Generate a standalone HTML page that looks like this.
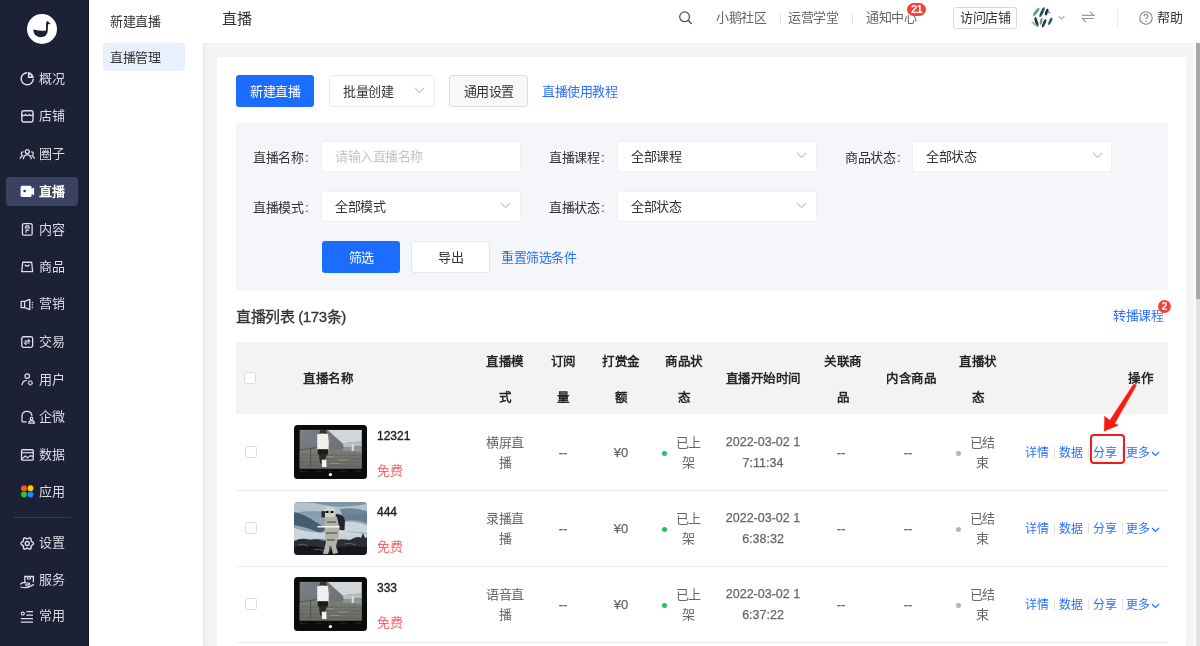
<!DOCTYPE html>
<html lang="zh-CN">
<head>
<meta charset="utf-8">
<style>
*{margin:0;padding:0;box-sizing:border-box}
html,body{width:1200px;height:646px;overflow:hidden;background:#fff}
body{font-family:"Liberation Sans",sans-serif;font-size:13px;color:#333;position:relative;letter-spacing:-0.5px}
.a{position:absolute;white-space:nowrap;will-change:transform}
#sb{left:0;top:0;width:89px;height:646px;background:#1c2136;border-right:1px solid #10142a}
#logo{left:27.3px;top:13.6px;width:30px;height:30px;border-radius:50%;background:#fff}
.nav{left:6px;width:72px;height:28px;border-radius:4px;color:#cfd2da;font-size:13px}
.nav svg{position:absolute;left:14px;top:7px}
.nav span{position:absolute;left:33px;top:6px;line-height:16px}
.nav.on{background:#3b4261;color:#fff;font-weight:bold}
#sb2{left:89px;top:0;width:114px;height:646px;background:#fff}
#hdr{left:203px;top:0;width:997px;height:43px;background:#fff}
#main{left:203px;top:43px;width:993px;height:603px;background:#f4f4f4;box-shadow:inset 5px 0 6px -4px rgba(0,0,0,0.07)}
#card{left:217px;top:57px;width:969px;height:600px;background:#fff}
.btn{height:32px;line-height:34px;text-align:center;border-radius:3px}
.blue{background:#1b6dff;color:#fff}
.link{color:#2b70ff}
#filter{left:236px;top:122px;width:932px;height:168px;background:#f5f6fa}
.lbl{color:#333;line-height:16px}
.sel{height:31px;width:200px;background:#fff;border-radius:2px;border:1px solid #eef0f4}
.sel span{position:absolute;left:13px;top:7px;line-height:16px;color:#333}
.chev{position:absolute}
.th{font-weight:bold;color:#262626;font-size:12.5px;line-height:16px;text-align:center}
.td{color:#666;line-height:16px;text-align:center}
.rowline{left:236px;width:932px;height:1px;background:#ebebeb}
.cb{width:12px;height:12px;border:1px solid #dcdcdc;border-radius:2px;background:#fff}
</style>
</head>
<body>
<!-- left dark sidebar -->
<div id="sb" class="a"></div>
<div id="logo" class="a">
  <svg width="30" height="30" viewBox="0 0 30 30" style="position:absolute;left:0;top:0">
    <path d="M6.1 15.6 Q12 17.2 19 16.4 L19 9.5 Q19.3 7 20.6 7 Q21.6 7.2 21.8 8.6 L23.8 9.9 L21 10.3 L20.8 16.5 Q20.4 23.3 13.2 23.3 Q7 23 6.1 15.6 Z" fill="#1c2136"/>
  </svg>
</div>

<div class="a" style="left:6px;top:177px;width:72px;height:29px;border-radius:4px;background:#3b4261"></div>
<div class="a" style="left:39px;top:71px;line-height:16px;color:#dcdee5;">概况</div>
<svg class="a" style="left:20px;top:71px" width="16" height="16" viewBox="0 0 16 16"><path d="M7.2 1.75 A6.05 6.05 0 1 0 13.25 7.8" fill="none" stroke="#dcdee5" stroke-width="1.5"/><path d="M7.9 1.1 V7.1 H13.9 A6.3 6.3 0 0 0 7.9 1.1 Z" fill="#dcdee5"/><circle cx="10.2" cy="4.7" r="0.9" fill="#1c2136"/></svg>
<div class="a" style="left:39px;top:108px;line-height:16px;color:#dcdee5;">店铺</div>
<svg class="a" style="left:20px;top:109px" width="16" height="16" viewBox="0 0 16 16"><rect x="1.8" y="1.8" width="11.2" height="11.2" rx="2" fill="none" stroke="#dcdee5" stroke-width="1.4"/><path d="M1.8 5.3 Q3.6 7.8 5.5 5.5 Q7.4 7.8 9.3 5.5 Q11.2 7.8 13 5.3" fill="none" stroke="#dcdee5" stroke-width="1.3"/></svg>
<div class="a" style="left:39px;top:146px;line-height:16px;color:#dcdee5;">圈子</div>
<svg class="a" style="left:19px;top:147px" width="16" height="16" viewBox="0 0 16 16"><circle cx="8.3" cy="4.6" r="2" fill="none" stroke="#dcdee5" stroke-width="1.3"/><path d="M4.4 12.2 Q4.6 7.8 8.3 7.8 Q12 7.8 12.2 12.2" fill="none" stroke="#dcdee5" stroke-width="1.3"/><path d="M3.4 9.3 Q1.3 9.5 1.2 11.8 M13.2 9.3 Q15.3 9.5 15.4 11.8" fill="none" stroke="#dcdee5" stroke-width="1.3"/><path d="M4.6 4.9 Q2.2 4.6 2.3 7 Q2.4 8.6 4.2 8.6 M12 4.9 Q14.4 4.6 14.3 7 Q14.2 8.6 12.4 8.6" fill="none" stroke="#dcdee5" stroke-width="1.2"/></svg>
<div class="a" style="left:39px;top:184px;line-height:16px;color:#fff;font-weight:bold;">直播</div>
<svg class="a" style="left:20px;top:185px" width="16" height="16" viewBox="0 0 16 16"><rect x="0.6" y="0.8" width="11" height="11.2" rx="1.6" fill="#fff"/><polygon points="11,4.2 14.1,2.6 14.1,10.2 11,8.6" fill="#fff"/><circle cx="4.6" cy="6" r="1.3" fill="#2a3050"/></svg>
<div class="a" style="left:39px;top:222px;line-height:16px;color:#dcdee5;">内容</div>
<svg class="a" style="left:21px;top:222px" width="16" height="16" viewBox="0 0 16 16"><rect x="1.45" y="1.55" width="9.7" height="11.6" rx="1.5" fill="none" stroke="#dcdee5" stroke-width="1.3"/><path d="M4.3 6 Q4.6 3.6 6.3 3.6 Q8 3.6 8.3 6 Z" fill="none" stroke="#dcdee5" stroke-width="1.2"/><path d="M4.5 7.6 H8.2 V8.8 H5.7 V10.8 H4.5 Z" fill="#dcdee5"/></svg>
<div class="a" style="left:39px;top:259px;line-height:16px;color:#dcdee5;">商品</div>
<svg class="a" style="left:21px;top:261px" width="16" height="16" viewBox="0 0 16 16"><path d="M1.75 1.25 H10.65 L11.65 10.65 H0.75 Z" fill="none" stroke="#dcdee5" stroke-width="1.3" stroke-linejoin="round"/><path d="M3.9 3.8 Q6.2 6.4 8.5 3.8" fill="none" stroke="#dcdee5" stroke-width="1.3"/></svg>
<div class="a" style="left:39px;top:296px;line-height:16px;color:#dcdee5;">营销</div>
<svg class="a" style="left:20px;top:298px" width="16" height="16" viewBox="0 0 16 16"><path d="M1.2 3.4 H4.6 V9.6 H1.2 Z M4.6 3.4 L9.8 1.3 V11.6 L4.6 9.6" fill="none" stroke="#dcdee5" stroke-width="1.3" stroke-linejoin="round"/><circle cx="12.4" cy="4.4" r="0.75" fill="#dcdee5"/><circle cx="12.4" cy="6.9" r="0.75" fill="#dcdee5"/><circle cx="12.4" cy="9.5" r="0.75" fill="#dcdee5"/></svg>
<div class="a" style="left:39px;top:334px;line-height:16px;color:#dcdee5;">交易</div>
<svg class="a" style="left:21px;top:335px" width="16" height="16" viewBox="0 0 16 16"><rect x="0.75" y="1.75" width="10.9" height="10.6" rx="1.8" fill="none" stroke="#dcdee5" stroke-width="1.3"/><path d="M3.6 6.2 H8.6 L7 4.4 M8.6 8 H3.6 L5.3 9.9" fill="none" stroke="#dcdee5" stroke-width="1.2"/></svg>
<div class="a" style="left:39px;top:372px;line-height:16px;color:#dcdee5;">用户</div>
<svg class="a" style="left:21px;top:372px" width="16" height="16" viewBox="0 0 16 16"><circle cx="6.2" cy="4.1" r="2.3" fill="none" stroke="#dcdee5" stroke-width="1.3"/><path d="M1 13.3 Q1.3 8.6 5.8 8.3" fill="none" stroke="#dcdee5" stroke-width="1.3"/><circle cx="9.3" cy="10.8" r="1.9" fill="none" stroke="#dcdee5" stroke-width="1.4" stroke-dasharray="1.6 0.4"/></svg>
<div class="a" style="left:39px;top:409px;line-height:16px;color:#dcdee5;">企微</div>
<svg class="a" style="left:21px;top:410px" width="16" height="16" viewBox="0 0 16 16"><path d="M5.6 11.9 H2.4 Q1 11.9 1 10.4 V6.6 Q1 1.4 6 1.4 Q10.4 1.4 11 5.8" fill="none" stroke="#dcdee5" stroke-width="1.3"/><circle cx="10.6" cy="8.4" r="1.3" fill="none" stroke="#dcdee5" stroke-width="1.1"/><path d="M7.8 13.2 Q7.9 10.6 10.6 10.6 Q13.3 10.6 13.4 13.2 Z" fill="none" stroke="#dcdee5" stroke-width="1.2"/></svg>
<div class="a" style="left:39px;top:447px;line-height:16px;color:#dcdee5;">数据</div>
<svg class="a" style="left:20px;top:448px" width="16" height="16" viewBox="0 0 16 16"><rect x="1.55" y="1.75" width="11.7" height="10.4" rx="1" fill="none" stroke="#dcdee5" stroke-width="1.3"/><path d="M1.6 4.7 H13.2" stroke="#dcdee5" stroke-width="1.2"/><path d="M1 11.6 L5.2 8 L7.6 9.7 L10.4 7.6 L13 8.6" fill="none" stroke="#dcdee5" stroke-width="1.2"/></svg>
<div class="a" style="left:39px;top:484px;line-height:16px;color:#dcdee5;">应用</div>
<svg class="a" style="left:20px;top:484px" width="16" height="16" viewBox="0 0 16 16"><circle cx="4" cy="4.2" r="2.9" fill="#ff5722"/><circle cx="10.5" cy="4.2" r="2.9" fill="#ffd100"/><circle cx="4" cy="10.5" r="2.9" fill="#22cc22"/><circle cx="10.5" cy="10.5" r="2.9" fill="#2186ff"/></svg>
<div class="a" style="left:39px;top:535px;line-height:16px;color:#dcdee5;">设置</div>
<svg class="a" style="left:20px;top:536px" width="16" height="16" viewBox="0 0 16 16"><path d="M13.50 7.50 L13.45 7.17 L13.31 6.86 L13.10 6.57 L12.82 6.32 L12.51 6.09 L12.20 5.89 L11.90 5.72 L11.64 5.55 L11.43 5.37 L11.28 5.18 L11.18 4.95 L11.14 4.68 L11.12 4.37 L11.12 4.02 L11.10 3.65 L11.06 3.27 L10.98 2.90 L10.83 2.57 L10.63 2.29 L10.38 2.09 L10.07 1.97 L9.73 1.93 L9.37 1.97 L9.01 2.08 L8.66 2.24 L8.33 2.41 L8.03 2.58 L7.75 2.72 L7.50 2.82 L7.25 2.85 L7.00 2.82 L6.75 2.72 L6.47 2.58 L6.17 2.41 L5.84 2.24 L5.49 2.08 L5.13 1.97 L4.77 1.93 L4.43 1.97 L4.13 2.09 L3.87 2.29 L3.67 2.57 L3.52 2.90 L3.44 3.27 L3.40 3.65 L3.38 4.02 L3.38 4.37 L3.36 4.68 L3.32 4.95 L3.22 5.18 L3.07 5.37 L2.86 5.55 L2.60 5.72 L2.30 5.89 L1.99 6.09 L1.68 6.32 L1.40 6.57 L1.19 6.86 L1.05 7.17 L1.00 7.50 L1.05 7.83 L1.19 8.14 L1.40 8.43 L1.68 8.68 L1.99 8.91 L2.30 9.11 L2.60 9.28 L2.86 9.45 L3.07 9.63 L3.22 9.82 L3.32 10.05 L3.36 10.32 L3.38 10.63 L3.38 10.98 L3.40 11.35 L3.44 11.73 L3.52 12.10 L3.67 12.43 L3.87 12.71 L4.12 12.91 L4.43 13.03 L4.77 13.07 L5.13 13.03 L5.49 12.92 L5.84 12.76 L6.17 12.59 L6.47 12.42 L6.75 12.28 L7.00 12.18 L7.25 12.15 L7.50 12.18 L7.75 12.28 L8.03 12.42 L8.33 12.59 L8.66 12.76 L9.01 12.92 L9.37 13.03 L9.73 13.07 L10.07 13.03 L10.38 12.91 L10.63 12.71 L10.83 12.43 L10.98 12.10 L11.06 11.73 L11.10 11.35 L11.12 10.98 L11.12 10.63 L11.14 10.32 L11.18 10.05 L11.28 9.82 L11.43 9.63 L11.64 9.45 L11.90 9.28 L12.20 9.11 L12.51 8.91 L12.82 8.68 L13.10 8.43 L13.31 8.14 L13.45 7.83 L13.50 7.50 Z" fill="none" stroke="#dcdee5" stroke-width="1.45" stroke-linejoin="round"/><circle cx="7.25" cy="7.5" r="2" fill="none" stroke="#dcdee5" stroke-width="1.4"/></svg>
<div class="a" style="left:39px;top:572px;line-height:16px;color:#dcdee5;">服务</div>
<svg class="a" style="left:20px;top:575px" width="16" height="16" viewBox="0 0 16 16"><path d="M4.8 7.2 V1.5 H13.4 V7.2" fill="none" stroke="#dcdee5" stroke-width="1.3"/><path d="M7.6 1.5 V4 H10.4 V1.5" fill="none" stroke="#dcdee5" stroke-width="1.1"/><path d="M0.6 9 Q3 6.8 6 7.8 L9.2 8.2 Q10.2 9.2 9 9.8 L5.6 10 M1 12 Q6.5 14.2 13.5 9.6" fill="none" stroke="#dcdee5" stroke-width="1.3" stroke-linecap="round"/></svg>
<div class="a" style="left:39px;top:608px;line-height:16px;color:#dcdee5;">常用</div>
<svg class="a" style="left:20px;top:610px" width="16" height="16" viewBox="0 0 16 16"><circle cx="2.8" cy="3.6" r="1.5" fill="none" stroke="#dcdee5" stroke-width="1.2"/><path d="M6.4 1.7 H13 M6.4 5.2 H13 M0.8 8.6 H13 M0.8 12.1 H13" stroke="#dcdee5" stroke-width="1.3"/></svg>
<div class="a" style="left:14px;top:517px;width:57px;height:1px;background:#363c50"></div>

<!-- second sidebar -->
<div id="sb2" class="a"></div>
<div class="a" style="left:110px;top:14px;line-height:16px;color:#333">新建直播</div>
<div class="a" style="left:103px;top:43px;width:82px;height:28px;background:#e8f0fd;border-radius:3px"></div>
<div class="a" style="left:110px;top:50px;line-height:16px;color:#333">直播管理</div>

<!-- header -->
<div id="hdr" class="a"></div>
<div class="a" style="left:222px;top:10px;font-size:15px;line-height:18px;color:#333">直播</div>

<!-- main -->
<div id="main" class="a"></div>
<div id="card" class="a"></div>


<!-- header right -->
<svg class="a" style="left:678px;top:10px" width="15" height="15" viewBox="0 0 15 15"><circle cx="6.6" cy="6.8" r="4.9" fill="none" stroke="#555" stroke-width="1.3"/><path d="M10.2 10.4 L13.3 13.5" stroke="#555" stroke-width="1.4" stroke-linecap="round"/></svg>
<div class="a" style="left:716px;top:10px;line-height:16px;color:#666">小鹅社区</div>
<div class="a" style="left:780px;top:13px;width:1px;height:11px;background:#e5e5e5"></div>
<div class="a" style="left:788px;top:10px;line-height:16px;color:#666">运营学堂</div>
<div class="a" style="left:852px;top:13px;width:1px;height:11px;background:#e5e5e5"></div>
<div class="a" style="left:866px;top:10px;line-height:16px;color:#666">通知中心</div>
<div class="a" style="left:907px;top:3px;width:19px;height:13px;border-radius:7px;background:#f0443a;color:#fff;font-size:11px;line-height:13px;text-align:center;font-weight:bold">21</div>
<div class="a" style="left:953px;top:7px;width:64px;height:22px;border:1px solid #d9d9d9;border-radius:3px;color:#333;line-height:20px;text-align:center">访问店铺</div>
<svg class="a" style="left:1030px;top:6px" width="24" height="23" viewBox="1030 6 24 23"><ellipse cx="1036.25" cy="11.85" rx="1.30" ry="4.95" transform="rotate(37.5 1036.25 11.85)" fill="#4f9a94"/><ellipse cx="1042.05" cy="12.15" rx="1.40" ry="5.41" transform="rotate(25.2 1042.05 12.15)" fill="#2c4a52"/><ellipse cx="1046.70" cy="12.05" rx="1.40" ry="3.62" transform="rotate(19.3 1046.70 12.05)" fill="#1d2f38"/><ellipse cx="1036.45" cy="21.90" rx="1.40" ry="4.98" transform="rotate(163.4 1036.45 21.90)" fill="#203640"/><ellipse cx="1034.50" cy="24.00" rx="1.00" ry="3.80" transform="rotate(128.7 1034.50 24.00)" fill="#8fb3ad"/><ellipse cx="1041.10" cy="21.30" rx="1.20" ry="3.46" transform="rotate(-167.9 1041.10 21.30)" fill="#6d8fb0"/><ellipse cx="1044.10" cy="23.30" rx="1.30" ry="4.54" transform="rotate(24.0 1044.10 23.30)" fill="#22343c"/><ellipse cx="1050.30" cy="21.30" rx="1.40" ry="4.09" transform="rotate(23.6 1050.30 21.30)" fill="#2f5e5e"/><ellipse cx="1048.85" cy="12.40" rx="0.70" ry="2.01" transform="rotate(106.5 1048.85 12.40)" fill="#5c8d88"/></svg>
<svg class="a" style="left:1057px;top:15px" width="9" height="6" viewBox="0 0 9 6"><path d="M1.4 1.2 L4.4 4 L7.4 1.2" fill="none" stroke="#aaa" stroke-width="1.1"/></svg>
<svg class="a" style="left:1081px;top:10px" width="15" height="14" viewBox="0 0 15 14"><path d="M1 5.3 H12.8 L9 1.6 M13 8.5 H1.4 L5 12.4" fill="none" stroke="#999" stroke-width="1.15"/></svg>
<div class="a" style="left:1117px;top:9px;width:1px;height:19px;background:#ebebeb"></div>
<svg class="a" style="left:1139px;top:11px" width="14" height="14" viewBox="0 0 14 14"><circle cx="7" cy="7" r="6.2" fill="none" stroke="#888" stroke-width="1.1"/><path d="M5 5.3 Q5 3.4 7 3.4 Q9 3.4 9 5.2 Q9 6.3 7.6 6.9 Q7 7.2 7 8.3" fill="none" stroke="#888" stroke-width="1.1"/><circle cx="7" cy="10.2" r="0.7" fill="#888"/></svg>
<div class="a" style="left:1157px;top:10px;line-height:16px;color:#333">帮助</div>

<!-- scrollbar -->
<div class="a" style="left:1193px;top:43px;width:7px;height:603px;background:#fafafa"></div>
<div class="a" style="left:1196px;top:43px;width:4px;height:603px;background:#e2e2e2"></div>
<div class="a" style="left:1196px;top:43px;width:4px;height:256px;background:#a8a8a8"></div>

<!-- action row -->
<div class="a btn blue" style="left:236px;top:75px;width:78px">新建直播</div>
<div class="a" style="left:329px;top:75px;width:106px;height:32px;border:1px solid #ececec;border-radius:3px;background:#fff"></div>
<div class="a" style="left:343px;top:84px;line-height:16px;color:#333">批量创建</div>
<svg class="a chev" style="left:414px;top:87px" width="11" height="7" viewBox="0 0 11 7"><path d="M1 1 L5.5 5.5 L10 1" fill="none" stroke="#c8c8c8" stroke-width="1.1"/></svg>
<div class="a btn" style="left:449px;top:75px;width:79px;border:1px solid #dcdcdc;background:#f7f8fa;line-height:32px;color:#333">通用设置</div>
<div class="a link" style="left:542px;top:84px;line-height:16px">直播使用教程</div>

<!-- filter -->
<div id="filter" class="a"></div>
<div class="a lbl" style="left:253px;top:150px">直播名称<span style="margin-left:2px">:</span></div>
<div class="a sel" style="left:321px;top:141px"><span style="color:#c4c4c4">请输入直播名称</span></div>
<div class="a lbl" style="left:549px;top:150px">直播课程<span style="margin-left:2px">:</span></div>
<div class="a sel" style="left:617px;top:141px"><span>全部课程</span></div>
<svg class="a chev" style="left:796px;top:152px" width="11" height="7" viewBox="0 0 11 7"><path d="M1 1 L5.5 5.5 L10 1" fill="none" stroke="#c8c8c8" stroke-width="1.1"/></svg>
<div class="a lbl" style="left:845px;top:150px">商品状态<span style="margin-left:2px">:</span></div>
<div class="a sel" style="left:912px;top:141px"><span>全部状态</span></div>
<svg class="a chev" style="left:1092px;top:152px" width="11" height="7" viewBox="0 0 11 7"><path d="M1 1 L5.5 5.5 L10 1" fill="none" stroke="#c8c8c8" stroke-width="1.1"/></svg>
<div class="a lbl" style="left:253px;top:200px">直播模式<span style="margin-left:2px">:</span></div>
<div class="a sel" style="left:321px;top:191px"><span>全部模式</span></div>
<svg class="a chev" style="left:500px;top:202px" width="11" height="7" viewBox="0 0 11 7"><path d="M1 1 L5.5 5.5 L10 1" fill="none" stroke="#c8c8c8" stroke-width="1.1"/></svg>
<div class="a lbl" style="left:549px;top:200px">直播状态<span style="margin-left:2px">:</span></div>
<div class="a sel" style="left:617px;top:191px"><span>全部状态</span></div>
<svg class="a chev" style="left:796px;top:202px" width="11" height="7" viewBox="0 0 11 7"><path d="M1 1 L5.5 5.5 L10 1" fill="none" stroke="#c8c8c8" stroke-width="1.1"/></svg>
<div class="a btn blue" style="left:322px;top:241px;width:78px">筛选</div>
<div class="a btn" style="left:411px;top:241px;width:79px;border:1px solid #e6e6e6;background:#fff;line-height:32px;color:#333">导出</div>
<div class="a link" style="left:501px;top:250px;line-height:16px">重置筛选条件</div>

<!-- list title -->
<div class="a" style="left:236px;top:308px;font-size:15px;letter-spacing:-0.4px;-webkit-text-stroke:0.3px #333;line-height:18px;color:#333">直播列表 (173条)</div>
<div class="a link" style="left:1113px;top:308px;line-height:16px">转播课程</div>
<div class="a" style="left:1158px;top:300px;width:13px;height:13px;border-radius:50%;background:#f0443a;color:#fff;font-size:10px;line-height:13px;text-align:center;font-weight:bold;letter-spacing:0">2</div>

<!-- table header -->
<div class="a" style="left:236px;top:342px;width:932px;height:72px;background:#f3f3f4"></div>
<div class="a cb" style="left:244px;top:372px"></div>
<div class="a th" style="left:303px;top:371px">直播名称</div>
<svg width="0" height="0" style="position:absolute">
<defs>
<linearGradient id="wallg" x1="0" y1="0" x2="1" y2="1"><stop offset="0" stop-color="#7b8187"/><stop offset="1" stop-color="#62676c"/></linearGradient>
<linearGradient id="stairg" x1="0" y1="0" x2="0" y2="1"><stop offset="0" stop-color="#7d7e78"/><stop offset="1" stop-color="#6a6a64"/></linearGradient>
<linearGradient id="skyg2" x1="0" y1="0" x2="0" y2="1"><stop offset="0" stop-color="#7f93a6"/><stop offset="0.55" stop-color="#97a9b8"/><stop offset="1" stop-color="#647a8f"/></linearGradient>
<filter id="blr" x="-5%" y="-5%" width="110%" height="110%"><feGaussianBlur stdDeviation="0.35"/></filter>
<symbol id="th1" viewBox="0 0 73 54">
 <rect x="0" y="0" width="73" height="54" rx="3.5" fill="#0b0b0b"/>
 <g transform="translate(5.7,4.9)" filter="url(#blr)">
  <rect x="0" y="0" width="62" height="38.6" fill="url(#wallg)"/>
  <polygon points="27.9,0 62,0 62,11.4 42.8,13.4" fill="#d2d7db"/>
  <polygon points="42.8,13.4 62,11.4 62,16 44,17.5" fill="#b9bec1"/>
  <polygon points="44,17.5 62,16 62,24 40,25" fill="#8f9497"/>
  <rect x="52" y="14" width="2" height="7" fill="#dfe2e4"/>
  <polygon points="0,21 16,18 62,22 62,38.6 0,38.6" fill="url(#stairg)"/>
  <path d="M0 25 L62 25.5 M0 28.5 L62 29 M0 32 L62 32.5 M0 35.5 L62 36" stroke="#62625c" stroke-width="0.8"/>
  <path d="M26 27 H34 M38 30 H48 M30 33.5 H40" stroke="#9a9a92" stroke-width="0.8"/>
  <path d="M0 20 L17 17.8 M11 19 V36.6" stroke="#4a5054" stroke-width="1"/>
  <rect x="19.8" y="0" width="7.4" height="4.6" rx="2.2" fill="#3b302b"/>
  <path d="M17.4 4.6 Q22.5 3 28.3 4.2 L29.2 12 L28.8 19.8 L17.6 19.8 Z" fill="#eef0f2"/>
  <path d="M28.3 5.5 L30.5 11 L29.2 12 Z" fill="#c98a6a"/>
  <rect x="18" y="19.3" width="10.3" height="5" fill="#1c1c1c"/>
  <path d="M19 24 L20.5 33.5 L23.5 33.5 L27.8 24 Z" fill="#2b2b2b"/>
  <path d="M22 29.8 L26.6 29.8 L26.8 37 L22.4 37 Z" fill="#f4f4f4"/>
 </g>
 <circle cx="36.4" cy="49.6" r="1.6" fill="#fff"/>
 <path d="M5 46.3 H14 M22 46.3 H27 M34 46.3 H39 M46 46.3 H52 M60 46.3 H67" stroke="#2e2e2e" stroke-width="0.7"/>
</symbol>
<symbol id="th2" viewBox="0 0 73 53">
 <clipPath id="cp2"><rect x="0" y="0" width="73" height="53" rx="3.5"/></clipPath>
 <g clip-path="url(#cp2)" filter="url(#blr)">
  <rect x="0" y="0" width="73" height="53" fill="url(#skyg2)"/>
  <path d="M0 1 Q15 -1 30 3 Q45 7 73 2 V11 Q55 15 38 11 Q18 7 0 11 Z" fill="#b9c6d0" opacity="0.9"/>
  <path d="M0 10 Q10 12 22 20 Q28 24 34 27 L26 31 Q12 25 0 23 Z" fill="#3f5870" opacity="0.95"/>
  <path d="M46 7 Q60 5 73 9 V21 Q62 16 50 19 Z" fill="#5c768d" opacity="0.8"/>
  <path d="M44 21 Q58 17 73 23 V31 Q55 28 44 31 Z" fill="#d5dde3" opacity="0.85"/>
  <path d="M0 26 Q18 32 34 30 Q56 29 73 32 V38 Q50 40 30 37 Q12 36 0 39 Z" fill="#dfe5e9" opacity="0.75"/>
  <path d="M0 39 Q8 35 16 38 Q24 36 30 39 Q48 36 56 38 Q64 33 67 36 L69 31 L71 36 L73 35 V53 H0 Z" fill="#2a2f34"/>
  <path d="M0 45 Q15 42 30 46 Q50 43 73 45 V53 H0 Z" fill="#16181b"/>
  <path d="M4 43 Q9 41 14 44 M50 42 Q56 40 62 43 M20 48 Q26 46 30 49" stroke="#6a6e70" stroke-width="0.8" fill="none"/>
  <path d="M42 12 Q50 12 51 19 L50.5 28 Q46 29 43 26 Z" fill="#23272b"/>
  <path d="M31 15 Q37 13 43 15 L45.5 26 L44.5 34 L42 44 L44 51 L39 52 L37 44 L34 52 L29 52 L32 40 L30.5 30 Z" fill="#b3b1aa"/>
  <path d="M29.5 9 Q30.5 4.5 35.5 4.5 Q40.5 4.5 41.5 9 L41 15 L30 15 Z" fill="#d0cfca"/>
  <path d="M31.5 10 H34.5 M36.5 10 H39.5" stroke="#111" stroke-width="1.8"/>
  <rect x="27.5" y="9" width="3.5" height="6.5" rx="1" fill="#26292c"/>
  <path d="M33 20 L42 20 M32 31 L43 31 M33 38 L41 38 M36 44 V50" stroke="#3d3d3a" stroke-width="1"/>
  <path d="M23.5 24.7 H45.5" stroke="#f2f4f4" stroke-width="1.6"/>
 </g>
</symbol>
</defs></svg>
<div class="a th" style="left:455.0px;top:354px;width:100px;">直播模</div>
<div class="a th" style="left:455.0px;top:390px;width:100px;">式</div>
<div class="a th" style="left:513.0px;top:354px;width:100px;">订阅</div>
<div class="a th" style="left:513.0px;top:390px;width:100px;">量</div>
<div class="a th" style="left:571.0px;top:354px;width:100px;">打赏金</div>
<div class="a th" style="left:571.0px;top:390px;width:100px;">额</div>
<div class="a th" style="left:633.5px;top:354px;width:100px;">商品状</div>
<div class="a th" style="left:633.5px;top:390px;width:100px;">态</div>
<div class="a th" style="left:793.0px;top:354px;width:100px;">关联商</div>
<div class="a th" style="left:793.0px;top:390px;width:100px;">品</div>
<div class="a th" style="left:927.5px;top:354px;width:100px;">直播状</div>
<div class="a th" style="left:927.5px;top:390px;width:100px;">态</div>
<div class="a th" style="left:713.0px;top:371px;width:100px;">直播开始时间</div>
<div class="a th" style="left:861.0px;top:371px;width:100px;">内含商品</div>
<div class="a th" style="left:1100px;top:371px;width:53px;text-align:right">操作</div>
<div class="a rowline" style="top:490px"></div>
<div class="a cb" style="left:245px;top:446px"></div>
<svg class="a" style="left:294px;top:425px" width="73" height="54"><use href="#th1"/></svg>
<div class="a" style="left:377px;top:429px;line-height:14px;font-size:12px;letter-spacing:0;color:#222;-webkit-text-stroke:0.35px #222">12321</div>
<div class="a" style="left:377px;top:463px;line-height:16px;color:#fb6767">免费</div>
<div class="a td" style="left:455.0px;top:435px;width:100px;">横屏直</div>
<div class="a td" style="left:455.0px;top:455px;width:100px;">播</div>
<div class="a td" style="left:513.0px;top:445px;width:100px;-webkit-text-stroke:0.25px #666;letter-spacing:0">--</div>
<div class="a td" style="left:571.0px;top:445px;width:100px;-webkit-text-stroke:0.25px #666;letter-spacing:0">¥0</div>
<div class="a" style="left:662px;top:451px;width:5px;height:5px;border-radius:50%;background:#1fc35f"></div>
<div class="a td" style="left:638.0px;top:435px;width:100px;">已上</div>
<div class="a td" style="left:638.0px;top:455px;width:100px;">架</div>
<div class="a td" style="left:713.0px;top:435px;width:100px;font-size:12.5px;letter-spacing:0;-webkit-text-stroke:0.25px #666;line-height:15px">2022-03-02 1</div>
<div class="a td" style="left:713.0px;top:456px;width:100px;font-size:12.5px;letter-spacing:0;-webkit-text-stroke:0.25px #666;line-height:15px">7:11:34</div>
<div class="a td" style="left:791.0px;top:445px;width:100px;-webkit-text-stroke:0.25px #666;letter-spacing:0">--</div>
<div class="a td" style="left:858.0px;top:445px;width:100px;-webkit-text-stroke:0.25px #666;letter-spacing:0">--</div>
<div class="a" style="left:955.5px;top:451px;width:5px;height:5px;border-radius:50%;background:#b3b3b3"></div>
<div class="a td" style="left:932.0px;top:435px;width:100px;">已结</div>
<div class="a td" style="left:932.0px;top:455px;width:100px;">束</div>
<div class="a link" style="left:1025px;top:445px;line-height:16px;font-size:12px;letter-spacing:0">详情</div>
<div class="a link" style="left:1059px;top:445px;line-height:16px;font-size:12px;letter-spacing:0">数据</div>
<div class="a link" style="left:1093px;top:445px;line-height:16px;font-size:12px;letter-spacing:0">分享</div>
<div class="a link" style="left:1126px;top:445px;line-height:16px;font-size:12px;letter-spacing:0">更多</div>
<div class="a" style="left:1053.5px;top:447px;width:1px;height:11px;background:#e3e3e3"></div>
<div class="a" style="left:1087.5px;top:447px;width:1px;height:11px;background:#e3e3e3"></div>
<div class="a" style="left:1121.5px;top:447px;width:1px;height:11px;background:#e3e3e3"></div>
<svg class="a" style="left:1151px;top:451px" width="9" height="6" viewBox="0 0 9 6"><path d="M1 1 L4.5 4.5 L8 1" fill="none" stroke="#2b70ff" stroke-width="1.2"/></svg>
<div class="a rowline" style="top:566px"></div>
<div class="a cb" style="left:245px;top:522px"></div>
<svg class="a" style="left:294px;top:502px" width="73" height="53"><use href="#th2"/></svg>
<div class="a" style="left:377px;top:505px;line-height:14px;font-size:12px;letter-spacing:0;color:#222;-webkit-text-stroke:0.35px #222">444</div>
<div class="a" style="left:377px;top:539px;line-height:16px;color:#fb6767">免费</div>
<div class="a td" style="left:455.0px;top:511px;width:100px;">录播直</div>
<div class="a td" style="left:455.0px;top:531px;width:100px;">播</div>
<div class="a td" style="left:513.0px;top:521px;width:100px;-webkit-text-stroke:0.25px #666;letter-spacing:0">--</div>
<div class="a td" style="left:571.0px;top:521px;width:100px;-webkit-text-stroke:0.25px #666;letter-spacing:0">¥0</div>
<div class="a" style="left:662px;top:527px;width:5px;height:5px;border-radius:50%;background:#1fc35f"></div>
<div class="a td" style="left:638.0px;top:511px;width:100px;">已上</div>
<div class="a td" style="left:638.0px;top:531px;width:100px;">架</div>
<div class="a td" style="left:713.0px;top:511px;width:100px;font-size:12.5px;letter-spacing:0;-webkit-text-stroke:0.25px #666;line-height:15px">2022-03-02 1</div>
<div class="a td" style="left:713.0px;top:532px;width:100px;font-size:12.5px;letter-spacing:0;-webkit-text-stroke:0.25px #666;line-height:15px">6:38:32</div>
<div class="a td" style="left:791.0px;top:521px;width:100px;-webkit-text-stroke:0.25px #666;letter-spacing:0">--</div>
<div class="a td" style="left:858.0px;top:521px;width:100px;-webkit-text-stroke:0.25px #666;letter-spacing:0">--</div>
<div class="a" style="left:955.5px;top:527px;width:5px;height:5px;border-radius:50%;background:#b3b3b3"></div>
<div class="a td" style="left:932.0px;top:511px;width:100px;">已结</div>
<div class="a td" style="left:932.0px;top:531px;width:100px;">束</div>
<div class="a link" style="left:1025px;top:521px;line-height:16px;font-size:12px;letter-spacing:0">详情</div>
<div class="a link" style="left:1059px;top:521px;line-height:16px;font-size:12px;letter-spacing:0">数据</div>
<div class="a link" style="left:1093px;top:521px;line-height:16px;font-size:12px;letter-spacing:0">分享</div>
<div class="a link" style="left:1126px;top:521px;line-height:16px;font-size:12px;letter-spacing:0">更多</div>
<div class="a" style="left:1053.5px;top:523px;width:1px;height:11px;background:#e3e3e3"></div>
<div class="a" style="left:1087.5px;top:523px;width:1px;height:11px;background:#e3e3e3"></div>
<div class="a" style="left:1121.5px;top:523px;width:1px;height:11px;background:#e3e3e3"></div>
<svg class="a" style="left:1151px;top:527px" width="9" height="6" viewBox="0 0 9 6"><path d="M1 1 L4.5 4.5 L8 1" fill="none" stroke="#2b70ff" stroke-width="1.2"/></svg>
<div class="a rowline" style="top:642px"></div>
<div class="a cb" style="left:245px;top:598px"></div>
<svg class="a" style="left:294px;top:577px" width="73" height="54"><use href="#th1"/></svg>
<div class="a" style="left:377px;top:581px;line-height:14px;font-size:12px;letter-spacing:0;color:#222;-webkit-text-stroke:0.35px #222">333</div>
<div class="a" style="left:377px;top:615px;line-height:16px;color:#fb6767">免费</div>
<div class="a td" style="left:455.0px;top:587px;width:100px;">语音直</div>
<div class="a td" style="left:455.0px;top:607px;width:100px;">播</div>
<div class="a td" style="left:513.0px;top:597px;width:100px;-webkit-text-stroke:0.25px #666;letter-spacing:0">--</div>
<div class="a td" style="left:571.0px;top:597px;width:100px;-webkit-text-stroke:0.25px #666;letter-spacing:0">¥0</div>
<div class="a" style="left:662px;top:603px;width:5px;height:5px;border-radius:50%;background:#1fc35f"></div>
<div class="a td" style="left:638.0px;top:587px;width:100px;">已上</div>
<div class="a td" style="left:638.0px;top:607px;width:100px;">架</div>
<div class="a td" style="left:713.0px;top:587px;width:100px;font-size:12.5px;letter-spacing:0;-webkit-text-stroke:0.25px #666;line-height:15px">2022-03-02 1</div>
<div class="a td" style="left:713.0px;top:608px;width:100px;font-size:12.5px;letter-spacing:0;-webkit-text-stroke:0.25px #666;line-height:15px">6:37:22</div>
<div class="a td" style="left:791.0px;top:597px;width:100px;-webkit-text-stroke:0.25px #666;letter-spacing:0">--</div>
<div class="a td" style="left:858.0px;top:597px;width:100px;-webkit-text-stroke:0.25px #666;letter-spacing:0">--</div>
<div class="a" style="left:955.5px;top:603px;width:5px;height:5px;border-radius:50%;background:#b3b3b3"></div>
<div class="a td" style="left:932.0px;top:587px;width:100px;">已结</div>
<div class="a td" style="left:932.0px;top:607px;width:100px;">束</div>
<div class="a link" style="left:1025px;top:597px;line-height:16px;font-size:12px;letter-spacing:0">详情</div>
<div class="a link" style="left:1059px;top:597px;line-height:16px;font-size:12px;letter-spacing:0">数据</div>
<div class="a link" style="left:1093px;top:597px;line-height:16px;font-size:12px;letter-spacing:0">分享</div>
<div class="a link" style="left:1126px;top:597px;line-height:16px;font-size:12px;letter-spacing:0">更多</div>
<div class="a" style="left:1053.5px;top:599px;width:1px;height:11px;background:#e3e3e3"></div>
<div class="a" style="left:1087.5px;top:599px;width:1px;height:11px;background:#e3e3e3"></div>
<div class="a" style="left:1121.5px;top:599px;width:1px;height:11px;background:#e3e3e3"></div>
<svg class="a" style="left:1151px;top:603px" width="9" height="6" viewBox="0 0 9 6"><path d="M1 1 L4.5 4.5 L8 1" fill="none" stroke="#2b70ff" stroke-width="1.2"/></svg>
<div class="a" style="left:1090px;top:434px;width:35px;height:30px;border:2px solid #f21a14;border-radius:4px"></div>
<svg class="a" style="left:1095px;top:380px" width="50" height="56" viewBox="1095 380 50 56"><polygon points="1133.3,384.4 1134.8,384 1136.4,385.6 1114.8,423.4 1118.6,425.2 1104.1,431.3 1104.5,416.1 1109.8,420.2" fill="#f81c10" stroke="#f81c10" stroke-width="0.3" stroke-linejoin="round"/></svg>
</body>
</html>
